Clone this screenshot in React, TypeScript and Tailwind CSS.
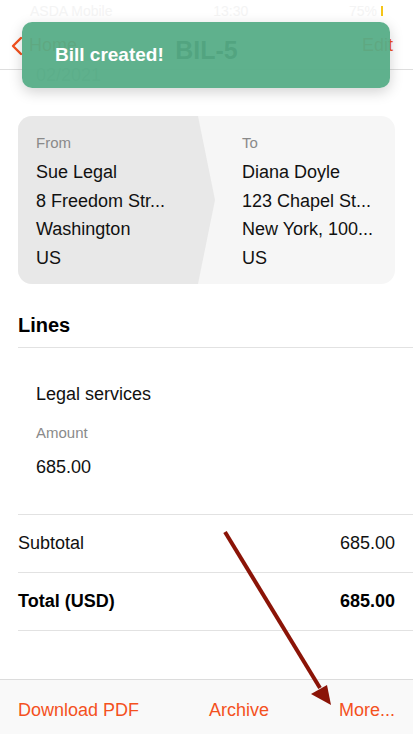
const font = { fontFamily: '"Liberation Sans", Arial, sans-serif' };

function Row({ label, value, bold }: { label: string; value: string; bold?: boolean }) {
  return (
    <div className="flex h-[58px] items-center justify-between border-b border-[#e2e2e2] pr-[18px]">
      <span className={bold ? 'font-semibold text-[18px] text-black' : 'text-[18px] text-[#111]'}>{label}</span>
      <span className={bold ? 'font-semibold text-[18px] text-black' : 'text-[18px] text-[#111]'}>{value}</span>
    </div>
  );
}

export default function App() {
  return (
    <div className="relative flex h-[734px] w-[413px] flex-col overflow-hidden bg-white" style={font}>
      {/* status bar */}
      <div className="flex h-[22px] items-center justify-between px-[30px] text-[14px] text-[#f4f4f4]">
        <span>ASDA Mobile</span>
        <span>13:30</span>
        <span className="flex items-center gap-1">
          75%
          <span className="h-[10px] w-[2px] bg-[#f5c518]" />
        </span>
      </div>

      {/* nav bar */}
      <div className="relative flex h-[48px] items-center justify-between border-b border-[#dedede] pl-[10px] pr-[20px]">
        <div className="flex items-center gap-[6px] text-[18px] text-[#f4511e]">
          <svg width="13" height="20" viewBox="0 0 13 20" fill="none">
            <path d="M11 2 L3 10 L11 18" stroke="#f4511e" strokeWidth="2.4" strokeLinecap="round" strokeLinejoin="round" />
          </svg>
          <span>Home</span>
        </div>
        <span className="absolute left-1/2 top-[10px] -translate-x-1/2 text-[25px] font-bold text-black">BIL-5</span>
        <span className="text-[18px] text-[#f4511e]">Edit</span>
        <span className="absolute left-[36px] top-[40px] text-[18px] text-[#bdbdbd]">02/2021</span>
      </div>

      {/* content */}
      <div className="flex-1">
        <div className="mx-[18px] mt-[46px] flex h-[168px] overflow-hidden rounded-[14px] bg-[#f6f6f6] text-[18px] text-[#111]">
          <div className="w-[197px] shrink-0 bg-[#e8e8e8] pl-[18px] pt-[16px] [clip-path:polygon(0_0,180px_0,100%_50%,180px_100%,0_100%)]">
            <div className="text-[15px] leading-[22px] text-[#8a8a8a]">From</div>
            <div className="mt-[4px] leading-[28.5px]">
              <div>Sue Legal</div>
              <div>8 Freedom Str...</div>
              <div>Washington</div>
              <div>US</div>
            </div>
          </div>
          <div className="pl-[27px] pt-[16px]">
            <div className="text-[15px] leading-[22px] text-[#8a8a8a]">To</div>
            <div className="mt-[4px] leading-[28.5px]">
              <div>Diana Doyle</div>
              <div>123 Chapel St...</div>
              <div>New York, 100...</div>
              <div>US</div>
            </div>
          </div>
        </div>

        <div className="ml-[18px] mt-[27px] border-b border-[#e2e2e2] pb-[8px] text-[20px] font-semibold leading-[28px] text-black">
          Lines
        </div>

        <div className="ml-[18px] border-b border-[#e2e2e2] pb-[35px] pl-[18px] pt-[34px] text-[18px] text-[#111]">
          <div className="leading-[24px]">Legal services</div>
          <div className="mt-[17px] text-[15px] leading-[20px] text-[#8a8a8a]">Amount</div>
          <div className="mt-[12px] leading-[24px]">685.00</div>
        </div>

        <div className="ml-[18px]">
          <Row label="Subtotal" value="685.00" />
          <Row label="Total (USD)" value="685.00" bold />
        </div>
      </div>

      {/* bottom toolbar */}
      <div className="flex h-[55px] justify-between border-t border-[#dcdcdc] bg-[#f9f9f9] px-[18px] pt-[19px] text-[18px] leading-[22px] text-[#f4511e]">
        <span>Download PDF</span>
        <span>Archive</span>
        <span>More...</span>
      </div>

      {/* toast */}
      <div className="absolute left-[22px] top-[22px] flex h-[66px] w-[368px] items-center rounded-[10px] bg-[#56ad87]/95 pl-[33px] shadow-[0_4px_14px_rgba(0,0,0,0.18)]">
        <span className="text-[19px] font-semibold text-white">Bill created!</span>
      </div>

      {/* annotation arrow */}
      <svg className="pointer-events-none absolute left-0 top-0" width="413" height="734" viewBox="0 0 413 734">
        <line x1="225" y1="532" x2="320" y2="688" stroke="#8b1407" strokeWidth="4" />
        <polygon points="331,705 311,694 327,685" fill="#8b1407" />
      </svg>
    </div>
  );
}
